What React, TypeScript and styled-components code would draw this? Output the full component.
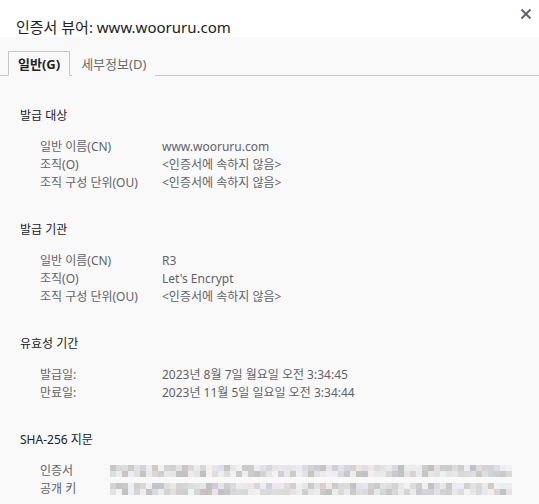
import styled, { createGlobalStyle } from 'styled-components';

const GlobalStyle = createGlobalStyle`
  html, body {
    margin: 0;
    padding: 0;
    background: #f9f9f9;
  }
  body {
    font-family: 'Noto Sans', 'Noto Sans CJK KR', sans-serif;
    color: #5f6368;
  }
`;

type Row = { label: string; value?: string; blurred?: boolean };
type SectionData = { title: string; rows: Row[] };

const NOT_PART = '<인증서에 속하지 않음>';

const sections: SectionData[] = [
  {
    title: '발급 대상',
    rows: [
      { label: '일반 이름(CN)', value: 'www.wooruru.com' },
      { label: '조직(O)', value: NOT_PART },
      { label: '조직 구성 단위(OU)', value: NOT_PART },
    ],
  },
  {
    title: '발급 기관',
    rows: [
      { label: '일반 이름(CN)', value: 'R3' },
      { label: '조직(O)', value: "Let's Encrypt" },
      { label: '조직 구성 단위(OU)', value: NOT_PART },
    ],
  },
  {
    title: '유효성 기간',
    rows: [
      { label: '발급일:', value: '2023년 8월 7일 월요일 오전 3:34:45' },
      { label: '만료일:', value: '2023년 11월 5일 일요일 오전 3:34:44' },
    ],
  },
  {
    title: 'SHA-256 지문',
    rows: [
      { label: '인증서', blurred: true },
      { label: '공개 키', blurred: true },
    ],
  },
];

const Dialog = styled.div`
  width: 539px;
  height: 504px;
  overflow: hidden;
  background: #f9f9f9;
`;

const Header = styled.header`
  height: 37px;
  background: #ffffff;
  display: flex;
  align-items: flex-start;
  justify-content: space-between;
  padding: 0 5px 0 16px;
  box-sizing: border-box;
`;

const Title = styled.h1`
  margin: 17px 0 0;
  font-size: 15px;
  font-weight: 400;
  line-height: 20px;
  color: #202124;
`;

const CloseButton = styled.button`
  margin-top: 6px;
  width: 16px;
  height: 16px;
  padding: 0;
  border: none;
  background: transparent;
  display: flex;
  align-items: center;
  justify-content: center;
  color: #5f6368;
`;

const TabBar = styled.nav`
  display: flex;
  align-items: flex-end;
  height: 39px;
  padding-left: 8px;
  border-bottom: 1px solid #c6c6c6;
  box-sizing: border-box;
`;

const Tab = styled.div<{ $active?: boolean }>`
  height: 25px;
  box-sizing: border-box;
  padding: 0 9px;
  margin-bottom: -1px;
  display: flex;
  align-items: center;
  font-size: 13px;
  font-weight: ${({ $active }) => ($active ? 700 : 400)};
  color: ${({ $active }) => ($active ? '#202124' : '#6b6b6b')};
  border: ${({ $active }) => ($active ? '1px solid #c6c6c6' : 'none')};
  border-bottom-color: #f9f9f9;
  background: #f9f9f9;
  margin-right: 2px;
`;

const Body = styled.main`
  padding: 31px 0 0 20px;
  display: flex;
  flex-direction: column;
  gap: 29px;
`;

const Section = styled.section`
  display: flex;
  flex-direction: column;
  gap: 13px;
`;

const Heading = styled.h2`
  margin: 0;
  font-size: 12px;
  font-weight: 400;
  line-height: 18px;
  color: #202124;
`;

const Fields = styled.dl`
  margin: 0;
  padding-left: 20px;
  display: grid;
  grid-template-columns: 122px 1fr;
  grid-auto-rows: 18px;
  font-size: 12px;
  line-height: 18px;
`;

const Label = styled.dt`
  color: #5f6368;
`;

const Value = styled.dd`
  margin: 0;
  color: #5f6368;
  white-space: pre;
  display: flex;
  align-items: center;
`;

const Mosaic = styled.div`
  display: grid;
  grid-template-columns: repeat(67, 6px);
  grid-template-rows: 6px 6px;
  margin-left: -52px;
`;

const Cell = styled.span`
  display: block;
`;

// deterministic pseudo-random gray tiles standing in for the blurred hash
const tileColors = (seed: number) => {
  let s = seed;
  const out: string[] = [];
  for (let i = 0; i < 134; i++) {
    s = (s * 9301 + 49297) % 233280;
    const r = s / 233280;
    const g = Math.round(192 + r * 50);
    s = (s * 9301 + 49297) % 233280;
    const tint = s / 233280;
    const rr = g + (tint > 0.85 ? 6 : 0);
    const bb = g + (tint < 0.15 ? 8 : 0);
    out.push(`rgb(${Math.min(rr, 245)}, ${g}, ${Math.min(bb, 245)})`);
  }
  return out;
};

const BlurredHash = ({ seed }: { seed: number }) => (
  <Mosaic>
    {tileColors(seed).map((c, i) => (
      <Cell key={i} style={{ background: c }} />
    ))}
  </Mosaic>
);

export default function App() {
  return (
    <Dialog>
      <GlobalStyle />
      <Header>
        <Title>인증서 뷰어: www.wooruru.com</Title>
        <CloseButton aria-label="닫기">
          <svg width="12" height="12" viewBox="0 0 12 12">
            <path d="M1.5 1.5 L10.5 10.5 M10.5 1.5 L1.5 10.5" stroke="#5f6368" strokeWidth="2" />
          </svg>
        </CloseButton>
      </Header>
      <TabBar>
        <Tab $active>일반(G)</Tab>
        <Tab>세부정보(D)</Tab>
      </TabBar>
      <Body>
        {sections.map((sec, si) => (
          <Section key={sec.title}>
            <Heading>{sec.title}</Heading>
            <Fields>
              {sec.rows.map((row, ri) => (
                <div key={row.label} style={{ display: 'contents' }}>
                  <Label>{row.label}</Label>
                  <Value>
                    {row.blurred ? <BlurredHash seed={si * 31 + ri * 7 + 5} /> : row.value}
                  </Value>
                </div>
              ))}
            </Fields>
          </Section>
        ))}
      </Body>
    </Dialog>
  );
}
